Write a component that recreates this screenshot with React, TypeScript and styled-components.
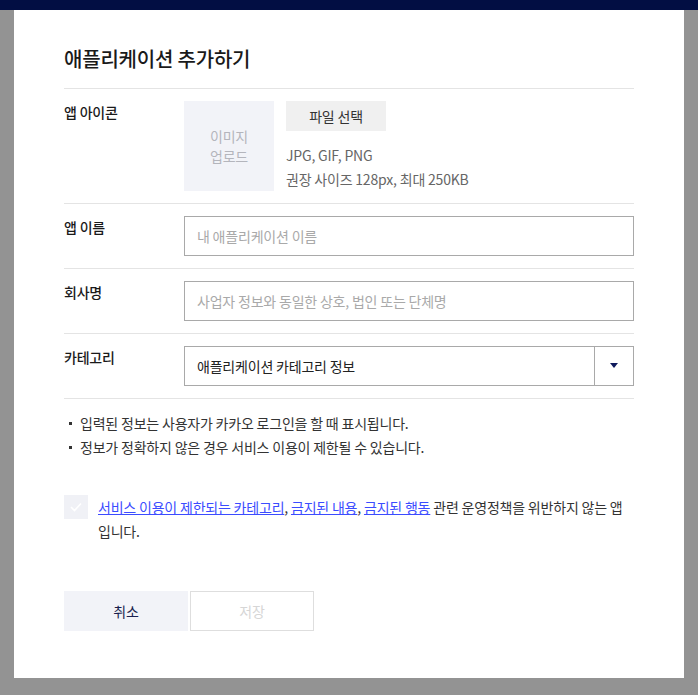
import React from "react";
import styled, { createGlobalStyle } from "styled-components";

const GlobalStyle = createGlobalStyle`
  html, body { margin: 0; padding: 0; }
  body {
    font-family: "Noto Sans CJK KR", "Noto Sans", sans-serif;
    color: #222;
    letter-spacing: -0.2px;
  }
  * { box-sizing: border-box; }
`;

const Page = styled.div`
  min-height: 695px;
  background: #939393;
  display: flex;
  flex-direction: column;
`;

const TopBar = styled.div`
  height: 10px;
  background: #020e43;
`;

const Modal = styled.div`
  margin: 0 14px;
  height: 668px;
  background: #fff;
  padding: 34px 50px 48px;
`;

const Title = styled.h1`
  margin: 0;
  font-size: 20px;
  font-weight: 500;
  line-height: 30px;
  color: #1a1a1a;
  padding-bottom: 14px;
  border-bottom: 1px solid #e4e4e4;
`;

const Row = styled.div`
  display: flex;
  padding: 12px 0;
  border-bottom: 1px solid #e4e4e4;
`;

const Label = styled.div`
  width: 120px;
  flex: none;
  font-size: 14px;
  font-weight: 500;
  line-height: 22px;
  color: #1a1a1a;
`;

const Field = styled.div`
  flex: 1;
  display: flex;
  gap: 12px;
`;

const UploadBox = styled.div`
  width: 90px;
  height: 90px;
  background: #f2f3f8;
  color: #b4b5bc;
  font-size: 14px;
  line-height: 20px;
  display: flex;
  align-items: center;
  justify-content: center;
  text-align: center;
`;

const FileCol = styled.div`
  display: flex;
  flex-direction: column;
  align-items: flex-start;
`;

const FileButton = styled.button`
  width: 100px;
  height: 30px;
  border: none;
  background: #f0f0f0;
  font-family: inherit;
  letter-spacing: inherit;
  font-size: 14px;
  color: #333;
  padding: 0;
  margin-bottom: 12px;
`;

const Hint = styled.div`
  font-size: 14px;
  line-height: 24px;
  color: #666;
`;

const Input = styled.input`
  flex: 1;
  height: 40px;
  border: 1px solid #a9a9a9;
  padding: 0 12px;
  font-family: inherit;
  letter-spacing: inherit;
  font-size: 14px;
  color: #222;
  outline: none;
  &::placeholder { color: #a9a9a9; }
`;

const Select = styled.div`
  flex: 1;
  height: 40px;
  border: 1px solid #a9a9a9;
  display: flex;
  align-items: stretch;
`;

const SelectValue = styled.div`
  flex: 1;
  padding: 0 12px;
  display: flex;
  align-items: center;
  font-size: 14px;
  color: #222;
`;

const SelectArrow = styled.div`
  width: 39px;
  border-left: 1px solid #a9a9a9;
  display: flex;
  align-items: center;
  justify-content: center;
`;

const Notes = styled.ul`
  list-style: none;
  margin: 0;
  padding: 12px 0 0;
`;

const Note = styled.li`
  position: relative;
  padding-left: 16px;
  font-size: 14px;
  line-height: 24px;
  color: #333;
  &::before {
    content: "";
    position: absolute;
    left: 5px;
    top: 11px;
    width: 3px;
    height: 3px;
    background: #333;
  }
`;

const Agree = styled.div`
  display: flex;
  gap: 10px;
  margin-top: 36px;
`;

const CheckBox = styled.div`
  width: 24px;
  height: 24px;
  flex: none;
  background: #f0f1f6;
  display: flex;
  align-items: center;
  justify-content: center;
`;

const AgreeText = styled.div`
  font-size: 14px;
  line-height: 24px;
  color: #333;
  word-break: keep-all;
`;

const Link = styled.a`
  color: #3b4cff;
  text-decoration: underline;
`;

const Buttons = styled.div`
  display: flex;
  gap: 2px;
  margin-top: 48px;
`;

const Button = styled.button<{ $primary?: boolean }>`
  width: 124px;
  height: 40px;
  font-family: inherit;
  letter-spacing: inherit;
  font-size: 14px;
  padding: 0;
  background: ${(p) => (p.$primary ? "#f2f3f8" : "#fff")};
  color: ${(p) => (p.$primary ? "#1a1f4e" : "#d6d6d6")};
  border: ${(p) => (p.$primary ? "none" : "1px solid #dedede")};
`;

export default function App() {
  return (
    <>
      <GlobalStyle />
      <Page>
        <TopBar />
        <Modal>
          <Title>애플리케이션 추가하기</Title>
          <Row>
            <Label>앱 아이콘</Label>
            <Field>
              <UploadBox>
                이미지
                <br />
                업로드
              </UploadBox>
              <FileCol>
                <FileButton>파일 선택</FileButton>
                <Hint>JPG, GIF, PNG</Hint>
                <Hint>권장 사이즈 128px, 최대 250KB</Hint>
              </FileCol>
            </Field>
          </Row>
          <Row>
            <Label>앱 이름</Label>
            <Field>
              <Input placeholder="내 애플리케이션 이름" />
            </Field>
          </Row>
          <Row>
            <Label>회사명</Label>
            <Field>
              <Input placeholder="사업자 정보와 동일한 상호, 법인 또는 단체명" />
            </Field>
          </Row>
          <Row>
            <Label>카테고리</Label>
            <Field>
              <Select>
                <SelectValue>애플리케이션 카테고리 정보</SelectValue>
                <SelectArrow>
                  <svg width="8" height="6" viewBox="0 0 8 6">
                    <path d="M0 0 H8 L4 5 Z" fill="#0f1a5c" />
                  </svg>
                </SelectArrow>
              </Select>
            </Field>
          </Row>
          <Notes>
            <Note>입력된 정보는 사용자가 카카오 로그인을 할 때 표시됩니다.</Note>
            <Note>정보가 정확하지 않은 경우 서비스 이용이 제한될 수 있습니다.</Note>
          </Notes>
          <Agree>
            <CheckBox>
              <svg width="12" height="10" viewBox="0 0 12 10">
                <path d="M1 5 L4.5 8.5 L11 1.5" fill="none" stroke="#fff" strokeWidth="1.6" />
              </svg>
            </CheckBox>
            <AgreeText>
              <Link>서비스 이용이 제한되는 카테고리</Link>, <Link>금지된 내용</Link>,{" "}
              <Link>금지된 행동</Link> 관련 운영정책을 위반하지 않는 앱 입니다.
            </AgreeText>
          </Agree>
          <Buttons>
            <Button $primary>취소</Button>
            <Button>저장</Button>
          </Buttons>
        </Modal>
      </Page>
    </>
  );
}
